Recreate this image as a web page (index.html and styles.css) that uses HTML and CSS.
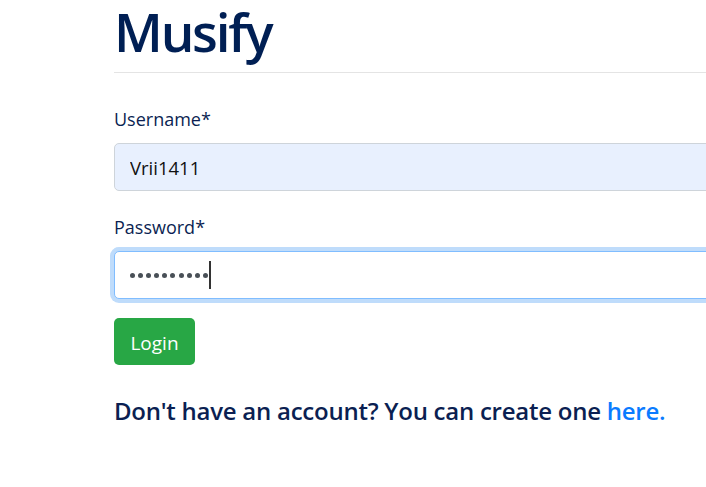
FILE: index.html
```html
<!DOCTYPE html>
<html>
<head>
<meta charset="utf-8">
<link rel="stylesheet" href="styles.css">
</head>
<body>
<div class="page">
  <h1 class="brand">Musify</h1>
  <hr class="rule">
  <form class="form">
    <div class="field">
      <label class="label" for="u">Username*</label>
      <input class="input autofill" id="u" type="text" value="Vrii1411">
    </div>
    <div class="field last">
      <label class="label">Password*</label>
      <div class="input focus">
        <span class="dots"><i></i><i></i><i></i><i></i><i></i><i></i><i></i><i></i><i></i><i></i></span><span class="caret"></span>
      </div>
    </div>
    <button class="btn" type="button">Login</button>
  </form>
  <p class="signup">Don't have an account? You can create one <a class="link" href="#">here.</a></p>
</div>
</body>
</html>
```

FILE: styles.css
```css
html, body {
  margin: 0;
  padding: 0;
  background: #fff;
  overflow: hidden;
}
body {
  font-family: "Open Sans", "Noto Sans", sans-serif;
  color: #0b1f52;
}
.page {
  width: 900px;
  padding-left: 114px;
}
.brand {
  margin: 0;
  font-size: 53px;
  line-height: 64px;
  font-weight: 600;
  color: #001f54;
  letter-spacing: -2.2px;
}
.rule {
  margin: 8px 0 0 0;
  height: 0;
  border: 0;
  border-top: 1px solid #e4e4e4;
}
.form {
  margin-top: 34px;
}
.field {
  margin-bottom: 24px;
}
.field.last {
  margin-bottom: 19px;
}
.label {
  display: block;
  font-size: 18px;
  line-height: 24px;
  margin-bottom: 12px;
  color: #0b1f52;
}
.input {
  box-sizing: border-box;
  display: flex;
  align-items: center;
  width: 100%;
  height: 48px;
  padding: 0 15px;
  border: 1px solid #ced4da;
  border-radius: 5px;
  font-family: "Open Sans", sans-serif;
  font-size: 18.5px;
  color: #111;
  background: #fff;
  outline: none;
}
.autofill {
  background: #e8f0fe;
}
.focus {
  border-color: #80bdff;
  box-shadow: 0 0 0 4px #bfdcfb;
  padding-left: 15px;
}
.dots {
  display: flex;
  gap: 3.1px;
  margin-top: 1px;
}
.dots i {
  display: block;
  width: 5px;
  height: 5px;
  border-radius: 50%;
  background: #495057;
}
.caret {
  display: block;
  width: 2px;
  height: 28px;
  background: #333;
  margin-left: 1px;
}
.btn {
  display: block;
  box-sizing: border-box;
  width: 81px;
  height: 47px;
  border: 0;
  border-radius: 5px;
  background: #28a745;
  color: #fff;
  font-family: "Open Sans", sans-serif;
  font-size: 19px;
  padding: 3px 0 0 0;
}
.signup {
  margin: 30px 0 0 0;
  font-size: 24px;
  line-height: 32px;
  font-weight: 600;
  letter-spacing: -0.25px;
  color: #0b1f52;
}
.link {
  color: #0a7bff;
  text-decoration: none;
}
```
